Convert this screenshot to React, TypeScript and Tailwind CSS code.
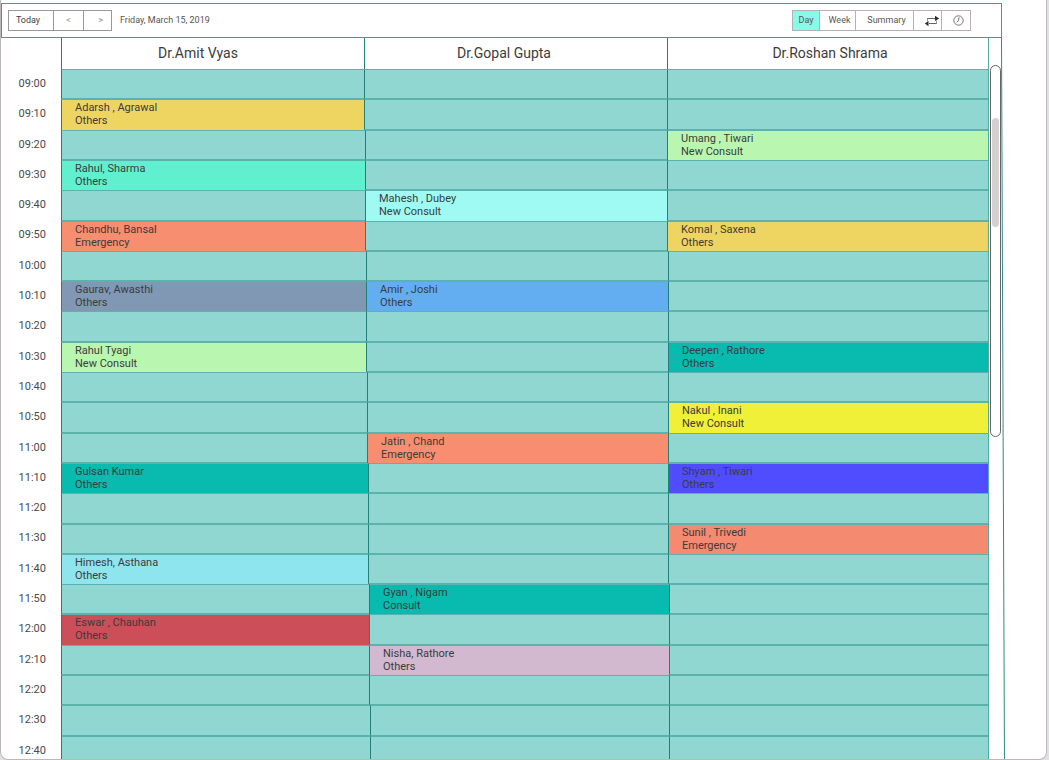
import React from "react";

type Visit = { name: string; kind: string; fill: string };

const TIMES = [
  "09:00", "09:10", "09:20", "09:30", "09:40", "09:50", "10:00", "10:10",
  "10:20", "10:30", "10:40", "10:50", "11:00", "11:10", "11:20", "11:30",
  "11:40", "11:50", "12:00", "12:10", "12:20", "12:30", "12:40",
];

const DOCTORS = [
  { name: "Dr.Amit Vyas", align: "pr-[30px]" },
  { name: "Dr.Gopal Gupta", align: "pr-6" },
  { name: "Dr.Roshan Shrama", align: "pl-1" },
];

const VISITS: Record<string, Visit>[] = [
  {
    "09:10": { name: "Adarsh , Agrawal", kind: "Others", fill: "bg-[#eed561]" },
    "09:30": { name: "Rahul, Sharma", kind: "Others", fill: "bg-[#60f0d0]" },
    "09:50": { name: "Chandhu, Bansal", kind: "Emergency", fill: "bg-[#f78e70]" },
    "10:10": { name: "Gaurav, Awasthi", kind: "Others", fill: "bg-[#8098b3]" },
    "10:30": { name: "Rahul Tyagi", kind: "New Consult", fill: "bg-[#b9f7b1]" },
    "11:10": { name: "Gulsan Kumar", kind: "Others", fill: "bg-[#09baae]" },
    "11:40": { name: "Himesh, Asthana", kind: "Others", fill: "bg-[#8ee5ee]" },
    "12:00": { name: "Eswar , Chauhan", kind: "Others", fill: "bg-[#cc4e58]" },
  },
  {
    "09:40": { name: "Mahesh , Dubey", kind: "New Consult", fill: "bg-[#9efaf2]" },
    "10:10": { name: "Amir , Joshi", kind: "Others", fill: "bg-[#62aef1]" },
    "11:00": { name: "Jatin , Chand", kind: "Emergency", fill: "bg-[#f78e70]" },
    "11:50": { name: "Gyan , Nigam", kind: "Consult", fill: "bg-[#09baae]" },
    "12:10": { name: "Nisha, Rathore", kind: "Others", fill: "bg-[#d2b9d0]" },
  },
  {
    "09:20": { name: "Umang , Tiwari", kind: "New Consult", fill: "bg-[#b9f7b1]" },
    "09:50": { name: "Komal , Saxena", kind: "Others", fill: "bg-[#eed561]" },
    "10:30": { name: "Deepen , Rathore", kind: "Others", fill: "bg-[#09baae]" },
    "10:50": { name: "Nakul , Inani", kind: "New Consult", fill: "bg-[#eff037]" },
    "11:10": { name: "Shyam , Tiwari", kind: "Others", fill: "bg-[#4f4dff]" },
    "11:30": { name: "Sunil , Trivedi", kind: "Emergency", fill: "bg-[#f48a70]" },
  },
];

// The dividers lean to the right as the day goes on.
function columns(row: number) {
  const lean = row / (TIMES.length - 1);
  const first = 303 + Math.round(lean * 6);
  const second = 606 + Math.round(lean * 2) - first;
  const third = 927 - first - second;
  return { gridTemplateColumns: `60px ${first}fr ${second}fr ${third}fr` };
}

function SwapIcon() {
  return (
    <svg width="16" height="12" viewBox="0 0 16 12" aria-hidden="true">
      <path d="M3 3.5H11M5 8.5h8" stroke="#666" fill="none" />
      <path d="M3.5 3.5v3M12.5 5.5v3" stroke="#999" fill="none" />
      <path d="M11 .8L15.2 3.5L11 6ZM4.5 6L.8 8.5L4.5 11.2Z" fill="#2b2b2b" />
    </svg>
  );
}

function ClockIcon() {
  return (
    <svg width="11" height="11" viewBox="0 0 11 11" aria-hidden="true" fill="none" stroke="#666" strokeWidth=".9">
      <circle cx="5.5" cy="5.5" r="4.7" />
      <path d="M6 2.2L5.5 5.8L3.6 7.4" />
    </svg>
  );
}

export default function App() {
  return (
    <div className="h-screen overflow-hidden bg-[#e3dfe5] pr-0.5 font-[Roboto,sans-serif] text-[#3c3c3c]">
      <div className="h-full overflow-hidden rounded-b-lg border border-t-0 border-[#bdb7b7] bg-white pt-[3px]">
        <div className="mr-11">
          <header className="flex h-[35px] items-center border border-[#50958f] pl-1.5 pr-[30px] text-[9px] text-[#555]">
            <nav className="flex h-[21px] divide-x divide-[#999] border border-[#999]">
              <button className="w-[45px] pr-1.5 text-[9px] text-[#444]">Today</button>
              <button className="w-[30px] text-[#999]" aria-label="Previous day">&lt;</button>
              <button className="w-[27px] pl-1.5 text-[#888]" aria-label="Next day">&gt;</button>
            </nav>
            <p className="ml-2">Friday, March 15, 2019</p>
            <nav className="ml-auto flex h-[21px] divide-x divide-[#b8b0b0] border border-[#b8b0b0]">
              <button className="w-[27px] bg-[#86fce8]">Day</button>
              <button className="w-9 pl-1">Week</button>
              <button className="w-[58px] pl-1">Summary</button>
              <button className="flex w-7 items-center justify-center pl-2" aria-label="Switch view"><SwapIcon /></button>
              <button className="flex w-7 items-center justify-center pl-1" aria-label="History"><ClockIcon /></button>
            </nav>
          </header>
          <div className="flex">
            <table className="block grow border-r border-[#5aa8a2]">
              <thead className="block">
                <tr className="grid h-[31px]" style={columns(0)}>
                  <th aria-label="Time" />
                  {DOCTORS.map((d) => (
                    <th key={d.name} scope="col" className={`flex items-center justify-center border-l border-[#237f77] text-[14px] font-normal ${d.align}`}>
                      {d.name}
                    </th>
                  ))}
                </tr>
              </thead>
              <tbody className="grid h-[697px] auto-rows-fr">
                {TIMES.map((time, row) => (
                  <tr key={time} className="grid" style={columns(row)}>
                    <th scope="row" className="flex items-center justify-end pr-[15px] text-[11px] font-normal text-[#4a4a4a]">{time}</th>
                    {VISITS.map((day, i) => {
                      const visit = day[time];
                      return (
                        <td
                          key={i}
                          className={`border-l border-t border-l-[#237f77] border-t-[#5cb3ad] ${visit ? visit.fill : "border-b bg-[#90d7d1] border-b-[#5cb3ad]"} pl-[13px] pt-px text-[11px] leading-[13px]`}
                        >
                          {visit && (
                            <>
                              <p>{visit.name}</p>
                              <p>{visit.kind}</p>
                            </>
                          )}
                        </td>
                      );
                    })}
                  </tr>
                ))}
              </tbody>
            </table>
            <div className="relative w-[13px] shrink-0">
              <svg className="absolute left-2 top-0 h-full w-2" viewBox="0 0 8 728" preserveAspectRatio="none" aria-hidden="true">
                <path d="M4.5 0L7.5 728" stroke="#2f8a82" fill="none" />
              </svg>
              <div className="relative ml-px mt-[27px] h-[372px] w-[11px] rounded-full border border-[#666] bg-white px-px pt-[52px]">
                <div className="h-[109px] rounded-full bg-[#d5d0d0]" />
              </div>
            </div>
          </div>
        </div>
      </div>
    </div>
  );
}
